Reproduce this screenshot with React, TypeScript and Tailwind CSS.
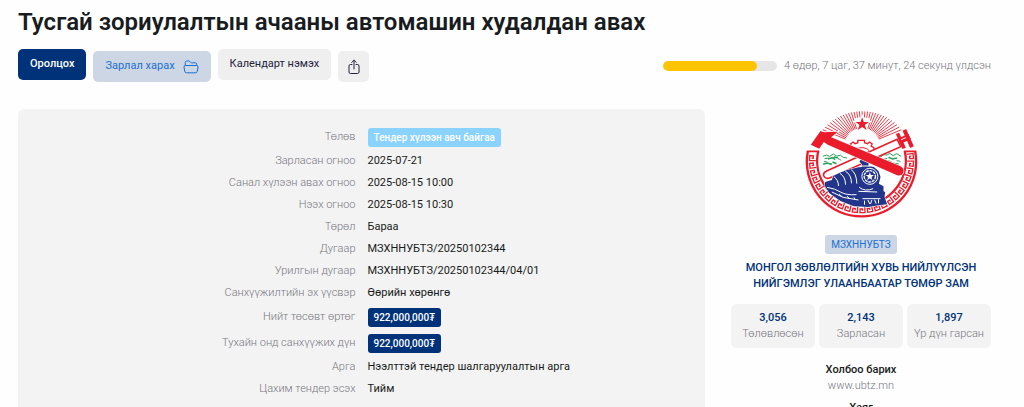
import React from 'react';
import { clsx } from 'clsx';

type Tone = 'sky' | 'navy';

interface Detail {
  label: string;
  value: string;
  badge?: Tone;
}

const details: Detail[] = [
  { label: 'Төлөв', value: 'Тендер хүлээн авч байгаа', badge: 'sky' },
  { label: 'Зарласан огноо', value: '2025-07-21' },
  { label: 'Санал хүлээн авах огноо', value: '2025-08-15 10:00' },
  { label: 'Нээх огноо', value: '2025-08-15 10:30' },
  { label: 'Төрөл', value: 'Бараа' },
  { label: 'Дугаар', value: 'МЗХННУБТЗ/20250102344' },
  { label: 'Урилгын дугаар', value: 'МЗХННУБТЗ/20250102344/04/01' },
  { label: 'Санхүүжилтийн эх үүсвэр', value: 'Өөрийн хөрөнгө' },
  { label: 'Нийт төсөвт өртөг', value: '922,000,000₮', badge: 'navy' },
  { label: 'Тухайн онд санхүүжих дүн', value: '922,000,000₮', badge: 'navy' },
  { label: 'Арга', value: 'Нээлттэй тендер шалгаруулалтын арга' },
  { label: 'Цахим тендер эсэх', value: 'Тийм' },
];

const stats = [
  { count: '3,056', label: 'Төлөвлөсөн' },
  { count: '2,143', label: 'Зарласан' },
  { count: '1,897', label: 'Үр дүн гарсан' },
];

const RED = '#ea1c2c';
const BLUE = '#22358a';
const GREEN = '#2aa25a';

function polar(cx: number, cy: number, r: number, deg: number) {
  const a = (deg * Math.PI) / 180;
  return `${(cx + r * Math.cos(a)).toFixed(1)} ${(cy + r * Math.sin(a)).toFixed(1)}`;
}

// Greek key running along the lower part of the ring
const meander = Array.from({ length: 23 }, (_, i) => {
  const start = -8 + i * 8.55;
  const points: [number, number][] = [
    [0, 137], [0, 156], [5.6, 156], [5.6, 145], [2.8, 145], [2.8, 150],
  ];
  return 'M' + points.map(([d, r]) => polar(195, 170, r, start + d)).join('L');
}).join('');

const rays = Array.from({ length: 31 }, (_, i) => {
  const deg = -157.5 + i * 4.5;
  const outer = 142 - 38 * Math.sin((-deg * Math.PI) / 180);
  const inner = Math.abs(deg + 90) < 18 ? 86 : 54;
  return `M${polar(197, 126, inner, deg)}L${polar(197, 126, outer, deg)}`;
}).join('');

function Emblem() {
  return (
    <svg viewBox="20 15 350 330" className="w-[117px] h-[110px]" role="img" aria-label="УБТЗ">
      <path d={rays} stroke={RED} strokeWidth="2.6" fill="none" />
      <path
        d="M197 40l5 14h15l-12 9 5 15-13-9-13 9 5-15-12-9h15z"
        fill={RED}
        stroke="#fff"
        strokeWidth="7"
        paintOrder="stroke"
      />

      {/* ring */}
      <path d="M34 142a164 164 0 1 0 322 0" fill="none" stroke={RED} strokeWidth="7" />
      <path d="M65 142a133 133 0 1 0 260 0" fill="none" stroke={RED} strokeWidth="7" />
      <path d="M31 142h37M322 142h37" stroke={RED} strokeWidth="5" />
      <path d={meander} fill="none" stroke={RED} strokeWidth="4" />

      {/* cog */}
      <path
        d="M160 142v-12l6-4-4-6 8-6 6 5 8-3v-7h20v7l9 3 6-5 8 6-3 6 8 5v12"
        fill="#fff"
        stroke={RED}
        strokeWidth="4"
      />
      <path d="M176 140c8-12 32-12 42 0" fill="none" stroke={RED} strokeWidth="3" />

      {/* hills */}
      <g fill="none" stroke={GREEN} strokeWidth="3">
        <path d="M79 157l12-4 8 4 12-7 9 6 12-2 8 6 12 2M84 164l12-2M124 163l10 6M82 172l10 2" />
        <path d="M94 165l14-4 8 6M112 158l12 4M80 181l12-4 14 4M108 174l12 5" strokeWidth="5" />
        <path d="M250 160l12-8 10 1 8-5 10 7 10-6 14 8M262 166l10-3M300 170l12 2" />
        <path d="M276 160l12 5 14-3M270 170l14 4M286 178l20 2" strokeWidth="5" />
      </g>

      {/* wrench */}
      <path
        d="M302 106L92 200q-14 6-10 16 5 11 19 5l212-93z"
        fill="#fff"
        stroke={RED}
        strokeWidth="5"
      />
      <path d="M298 90l10-4 20 45-10 4z" fill={RED} />
      <path d="M318 80l11-5 23 52-11 5z" fill={RED} />
      <path d="M306 103l30-13 7 16-30 13z" fill={RED} />
      <path d="M314 107l14-6" stroke="#fff" strokeWidth="3" />

      {/* locomotive */}
      <path
        d="M84 244l2-10 20-6 4-12 20-10 22-8 34-8 10-1v-9l-7-6 3-7h6l2-5h8l2 5h8l3 5-5 7v7l16 3 14 12 6 18-5 20 14 8v14l5 4-2 14 8 22-22 2-34 6-44-2-40-16-34-24z"
        fill={BLUE}
        stroke="#fff"
        strokeWidth="3"
        paintOrder="stroke"
      />
      <g fill="none" stroke="#fff" strokeWidth="3">
        <path d="M112 218q14 10 14 28M130 208q17 10 17 34M147 202q18 10 18 36M164 197q16 10 17 42" />
        <path d="M92 250q24 4 40 14t48 8M106 264l34 16 46 8M128 270l8 8M152 276l7 9M172 280l5 8" />
        <path d="M188 250q18 14 42 4M186 262l56 2M198 284h54" />
        <path d="M204 290v12M214 288l6 12M226 288l-4 12M234 287l5 12M246 286v12" />
        <path d="M196 186h26" />
      </g>
      <circle cx="220" cy="217" r="24" fill={BLUE} stroke="#fff" strokeWidth="3" />
      <circle cx="220" cy="217" r="17" fill="none" stroke="#fff" strokeWidth="4" strokeDasharray="9 2" />
      <path d="M220 204l3 9h10l-8 6 3 10-8-6-8 6 3-10-8-6h10z" fill="#fff" />

      {/* hammer */}
      <path
        d="M72 81q10 5 20 3l32-1-20 17 208 87q13 7 8 20-6 11-20 6L94 122l-12-8-14 20-25-12z"
        fill={RED}
        stroke="#fff"
        strokeWidth="4"
        paintOrder="stroke"
      />
    </svg>
  );
}

function FolderIcon() {
  return (
    <svg viewBox="0 0 16 14" className="w-4 h-3.5" fill="none" stroke="currentColor" strokeLinejoin="round">
      <path d="M2.3 5.5V2.4Q2.3 1 3.7 1h2.1q.6 0 1 .5l.7.9q.4.4 1 .4h3.8q1.4 0 1.4 1.4v1.3" />
      <path d="M2.4 5.5h11.2q1.6 0 1.4 1.5l-.7 4.2q-.2 1.6-1.8 1.6h-9q-1.6 0-1.8-1.6L1 7q-.2-1.5 1.4-1.5z" />
    </svg>
  );
}

function ShareIcon() {
  return (
    <svg viewBox="0 0 12 16" className="w-3 h-4" fill="none" stroke="currentColor" strokeLinecap="round" strokeLinejoin="round">
      <path d="M4 5.5H2.5Q1 5.5 1 7v6q0 1.5 1.5 1.5h7q1.5 0 1.5-1.5V7q0-1.5-1.5-1.5H8M6 10V1.2M3.7 3.4L6 1.2l2.3 2.2" />
    </svg>
  );
}

function Badge({ tone, children }: { tone: Tone; children: React.ReactNode }) {
  return (
    <span
      className={clsx(
        'rounded-[3px] px-1.5 text-[10px] leading-[19px] font-medium text-white',
        tone === 'sky' ? 'bg-[#8ad2ff]' : 'bg-[#003279]'
      )}
    >
      {children}
    </span>
  );
}

function App() {
  return (
    <main className="bg-[#fefefe] pl-[18px] pr-[33px] pt-2 font-['Roboto','Noto_Sans',sans-serif] text-[11px] text-[#181c20]">
      <h1 className="text-2xl leading-7 font-semibold">Тусгай зориулалтын ачааны автомашин худалдан авах</h1>

      <div className="mt-[13px] flex items-start justify-between">
        <div className="flex items-start gap-[7px]">
          <button className="h-[31px] rounded-[5px] bg-[#003279] px-3 font-medium text-white">Оролцох</button>
          <button className="mt-0.5 flex h-[31px] items-center gap-2 rounded-[5px] bg-[#ccd6e4] px-3 text-[#1b70d4]">
            Зарлал харах
            <FolderIcon />
          </button>
          <button className="h-[31px] rounded-[5px] bg-[#efefef] px-3 text-[#23233d]">Календарт нэмэх</button>
          <button aria-label="Хуваалцах" className="mt-0.5 flex h-[31px] w-[31px] items-center justify-center rounded-[5px] bg-[#efefef] text-[#23233d]">
            <ShareIcon />
          </button>
        </div>

        <div className="mt-[9px] flex items-center gap-[7px]">
          <div className="h-2.5 w-[114px] overflow-hidden rounded-full bg-[#e6e6e8]">
            <div className="h-full rounded-full bg-[#ffc400]" style={{ width: '83%' }} />
          </div>
          <span className="leading-4 font-light text-[#77777f]">4 өдөр, 7 цаг, 37 минут, 24 секунд үлдсэн</span>
        </div>
      </div>

      <div className="mt-[27px] flex items-start gap-[26px]">
        <section className="flex-1 rounded-md bg-[#f3f3f3] pt-[15px] pb-6">
          <dl>
            {details.map((item) => (
              <div key={item.label} className={clsx('grid grid-cols-2 items-center gap-3', item.badge ? 'h-[26px]' : 'h-[22px]')}>
                <dt className="text-right font-light text-[#77777f]">{item.label}</dt>
                <dd className="flex items-center">
                  {item.badge ? <Badge tone={item.badge}>{item.value}</Badge> : item.value}
                </dd>
              </div>
            ))}
          </dl>
        </section>

        <aside className="flex w-[260px] shrink-0 flex-col items-center text-center">
          <Emblem />
          <span className="mt-4 rounded-[3px] bg-[#ccd6e4] px-1.5 text-[10px] leading-[19px] text-[#1b70d4]">МЗХННУБТЗ</span>
          <h2 className="mt-1.5 leading-4 font-medium text-[#003279]">
            МОНГОЛ ЗӨВЛӨЛТИЙН ХУВЬ НИЙЛҮҮЛСЭН НИЙГЭМЛЭГ УЛААНБААТАР ТӨМӨР ЗАМ
          </h2>

          <div className="mt-3 grid w-full grid-cols-3 gap-1">
            {stats.map((stat) => (
              <div key={stat.label} className="rounded-md bg-[#f3f3f3] py-1.5 leading-4">
                <div className="font-medium text-[#003279]">{stat.count}</div>
                <div className="whitespace-nowrap font-light text-[#77777f]">{stat.label}</div>
              </div>
            ))}
          </div>

          <div className="mt-3.5 leading-4">
            <h3 className="font-medium">Холбоо барих</h3>
            <a href="http://www.ubtz.mn" className="block font-light text-[#77777f]">www.ubtz.mn</a>
          </div>
          <div className="mt-1.5 leading-4">
            <h3 className="font-medium">Хаяг</h3>
          </div>
        </aside>
      </div>
    </main>
  );
}

export default App;
